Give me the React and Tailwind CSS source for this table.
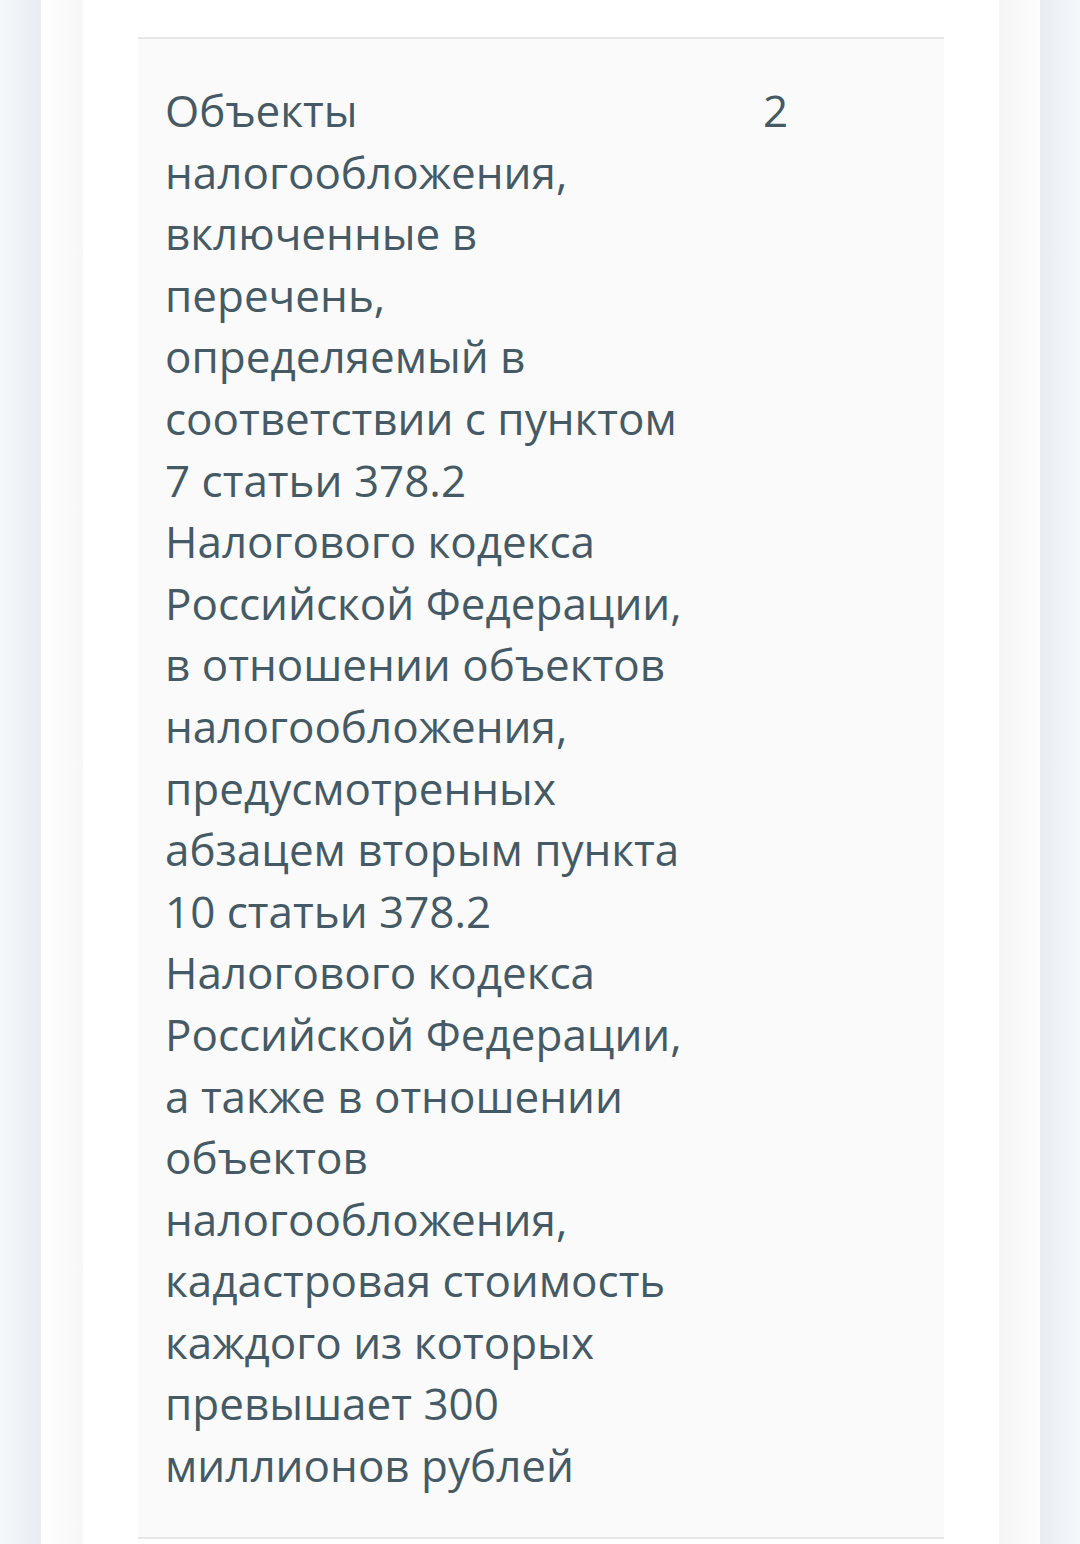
export default function App() {
  return (
    <div className="flex h-[1544px] w-full overflow-hidden bg-white" style={{ fontFamily: '"Open Sans", "Noto Sans", sans-serif' }}>
      <div className="w-[41px] shrink-0 bg-gradient-to-r from-[#f4f7fa] to-[#e9edf3]" />
      <div className="w-[42px] shrink-0 bg-gradient-to-r from-white to-[#f7f7f7]" />
      <div className="flex-1 bg-white px-[55px] pt-[37px]">
        <table className="w-full border-collapse">
          <tbody>
            <tr className="border-t-2 border-b-2 border-[#e6e6e6] bg-[#fafafa] align-top">
              <td className="w-[597px] pl-[27px] pr-[29px] pt-[41px] pb-[40px] text-[44px] leading-[1.4] text-[#455a64]">
                Объекты налогообложения, включенные в перечень, определяемый в соответствии с пунктом 7 статьи 378.2 Налогового кодекса Российской Федерации, в отношении объектов налогообложения, предусмотренных абзацем вторым пункта 10 статьи 378.2 Налогового кодекса Российской Федерации, а также в отношении объектов налогообложения, кадастровая стоимость каждого из которых превышает 300 миллионов рублей
              </td>
              <td className="pl-[28px] pr-[28px] pt-[41px] text-[44px] leading-[1.4] text-[#455a64]">
                2
              </td>
            </tr>
          </tbody>
        </table>
      </div>
      <div className="w-[41px] shrink-0 bg-gradient-to-r from-[#f5f5f5] to-[#fdfdfd]" />
      <div className="w-[40px] shrink-0 bg-gradient-to-r from-[#e9edf3] to-[#f4f7fa]" />
    </div>
  );
}
